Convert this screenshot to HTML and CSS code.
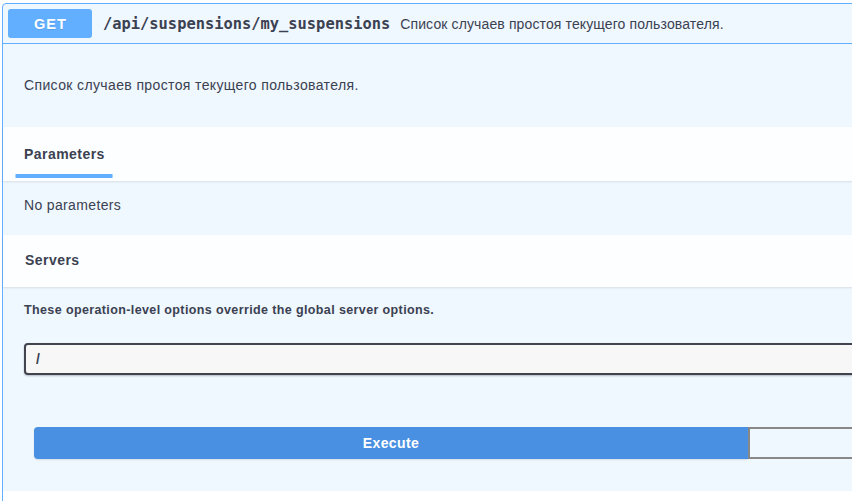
FILE: index.html
```html
<!DOCTYPE html>
<html lang="ru">
<head>
<meta charset="utf-8">
<title>GET /api/suspensions/my_suspensions</title>
<link rel="stylesheet" href="styles.css">
</head>
<body>
<div class="page">
  <div class="opblock">
    <div class="summary">
      <span class="method">GET</span>
      <span class="path">/api/suspensions/my_suspensions</span>
      <span class="summary-desc">Список случаев простоя текущего пользователя.</span>
    </div>
    <div class="op-body">
      <div class="desc-wrap">
        <p>Список случаев простоя текущего пользователя.</p>
      </div>
      <div class="section-header">
        <h4 class="tab-item"><span>Parameters</span></h4>
      </div>
      <div class="params-body">
        <p>No parameters</p>
      </div>
      <div class="section-header servers-header">
        <h4 class="plain-title">Servers</h4>
      </div>
      <div class="servers-body">
        <p class="note">These operation-level options override the global server options.</p>
        <div class="select">/</div>
        <div class="btn-group">
          <button class="btn execute">Execute</button>
          <button class="btn clear" aria-label="Clear"></button>
        </div>
      </div>
      <div class="responses"></div>
    </div>
  </div>
</div>
</body>
</html>
```
FILE: styles.css
```css
html, body {
  margin: 0;
  padding: 0;
  background: #ffffff;
  overflow: hidden;
}

body {
  font-family: "Liberation Sans", Arial, sans-serif;
  color: #3b4151;
}

.page {
  padding: 3px 0 0 2px;
}

.opblock {
  width: 1494px;
  border: 1px solid #61affe;
  border-radius: 4px;
  background: #eff7ff;
}

.summary {
  display: flex;
  align-items: center;
  padding: 5px;
  border-bottom: 1px solid #61affe;
}

.method {
  box-sizing: border-box;
  width: 84px;
  height: 29px;
  display: flex;
  align-items: center;
  justify-content: center;
  background: #61affe;
  border-radius: 3px;
  color: #ffffff;
  font-size: 14.5px;
  font-weight: 700;
  letter-spacing: 1px;
  text-indent: 1px;
  text-shadow: 0 1px 0 rgba(0, 0, 0, 0.1);
}

.path {
  padding: 0 10px 0 11px;
  font-family: "DejaVu Sans Mono", "Liberation Mono", monospace;
  font-size: 15.4px;
  font-weight: 700;
  color: #3b4151;
}

.summary-desc {
  font-size: 14px;
  letter-spacing: 0.12px;
  color: #3b4151;
}

.desc-wrap {
  padding: 32px 21px 33px;
}

.desc-wrap p {
  margin: 0;
  font-size: 14px;
  line-height: 18px;
  letter-spacing: 0.37px;
}

.section-header {
  box-sizing: border-box;
  height: 54px;
  display: flex;
  align-items: center;
  padding: 0 21px;
  background: rgba(255, 255, 255, 0.8);
  box-shadow: 0 1px 2px rgba(0, 0, 0, 0.1);
}

.servers-header {
  height: 52px;
  padding-bottom: 2px;
}

.section-header h4 {
  margin: 0;
  font-size: 14px;
  font-weight: 700;
  letter-spacing: 0.45px;
  line-height: 18px;
}

.tab-item span {
  position: relative;
}

.tab-item span::after {
  content: "";
  position: absolute;
  left: 50%;
  bottom: -16px;
  width: 120%;
  height: 4px;
  transform: translateX(-50%);
  background: #61affe;
}

.plain-title {
  padding-left: 1px;
}

.params-body {
  box-sizing: border-box;
  height: 54px;
  padding: 15px 21px 0;
}

.params-body p {
  margin: 0;
  font-size: 14px;
  line-height: 18px;
  letter-spacing: 0.35px;
}

.servers-body {
  padding: 15px 0 32px;
}

.note {
  margin: 0 21px;
  font-size: 12.5px;
  font-weight: 700;
  line-height: 16px;
  letter-spacing: 0.38px;
}

.select {
  box-sizing: border-box;
  height: 32px;
  margin: 25px 0 0 21px;
  padding: 0 10px;
  display: flex;
  align-items: center;
  background: #f7f7f7;
  border: 2px solid #41444e;
  border-radius: 4px;
  box-shadow: 0 1px 2px 0 rgba(0, 0, 0, 0.25);
  font-size: 14px;
  font-weight: 700;
}

.btn-group {
  display: flex;
  margin-top: 52px;
  padding: 0 31px;
}

.btn {
  flex: 1;
  box-sizing: border-box;
  height: 32px;
  margin: 0;
  font-family: "Liberation Sans", Arial, sans-serif;
  font-size: 14px;
  font-weight: 700;
  letter-spacing: 0.4px;
}

.execute {
  border: 0;
  border-radius: 4px 0 0 4px;
  background: #4990e2;
  color: #ffffff;
  box-shadow: 0 1px 2px rgba(0, 0, 0, 0.1);
}

.clear {
  border: 2px solid #888888;
  border-radius: 0 4px 4px 0;
  background: transparent;
}

.responses {
  height: 54px;
  background: #ffffff;
}
```
